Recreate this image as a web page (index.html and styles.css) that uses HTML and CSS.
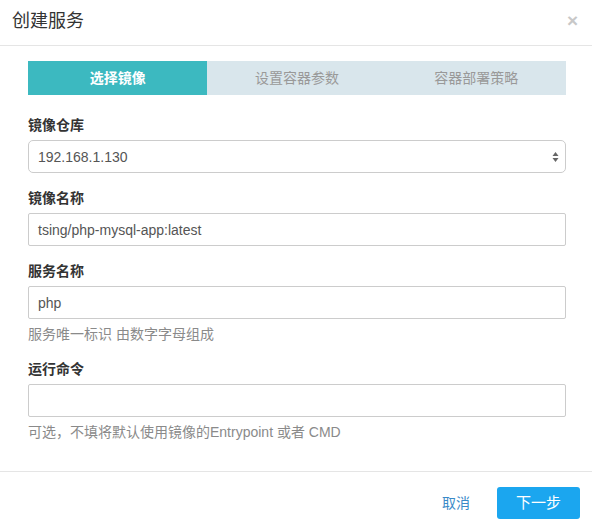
FILE: index.html
```html
<!DOCTYPE html>
<html lang="zh">
<head>
<meta charset="utf-8">
<link rel="stylesheet" href="styles.css">
</head>
<body>
<div class="modal">
  <div class="modal-header">
    <h4 class="modal-title">创建服务</h4>
    <span class="close">×</span>
  </div>
  <div class="modal-body">
    <div class="steps">
      <div class="step active">选择镜像</div>
      <div class="step">设置容器参数</div>
      <div class="step">容器部署策略</div>
    </div>
    <div class="form-group">
      <label class="label">镜像仓库</label>
      <div class="control select">
        <span>192.168.1.130</span>
        <svg class="arrows" width="7" height="12" viewBox="0 0 7 12"><path d="M3.5 1 L6.5 5 L0.5 5 Z" fill="#666"/><path d="M3.5 11 L6.5 7 L0.5 7 Z" fill="#666"/></svg>
      </div>
    </div>
    <div class="form-group">
      <label class="label">镜像名称</label>
      <div class="control">tsing/php-mysql-app:latest</div>
    </div>
    <div class="form-group">
      <label class="label">服务名称</label>
      <div class="control">php</div>
      <p class="help">服务唯一标识 由数字字母组成</p>
    </div>
    <div class="form-group">
      <label class="label">运行命令</label>
      <div class="control"></div>
      <p class="help">可选，不填将默认使用镜像的Entrypoint 或者 CMD</p>
    </div>
  </div>
  <div class="modal-footer">
    <span class="btn-link">取消</span>
    <span class="btn-primary">下一步</span>
  </div>
</div>
</body>
</html>
```
FILE: styles.css
```css
* { box-sizing: border-box; }
html, body { margin: 0; padding: 0; background: #fff; }
body {
  font-family: "Liberation Sans", "Noto Sans CJK SC", sans-serif;
  font-size: 14px;
  line-height: 20px;
  color: #333;
}
.modal { width: 592px; background: #fff; }
.modal-header {
  height: 46px;
  border-bottom: 1px solid #e5e5e5;
  display: flex;
  align-items: center;
  justify-content: space-between;
  padding: 0 14px 4px 12px;
}
.modal-title {
  margin: 0;
  font-size: 18px;
  font-weight: normal;
  line-height: 24px;
  color: #333;
}
.close {
  font-size: 19px;
  font-weight: bold;
  color: #c8c8c8;
  line-height: 20px;
}
.modal-body { padding: 15px 26px 29px 28px; }
.steps {
  display: flex;
  height: 34px;
  background: #d9e6ec;
  margin-bottom: 20px;
}
.step {
  flex: 1;
  display: flex;
  align-items: center;
  justify-content: center;
  color: #999;
  font-size: 14px;
}
.step.active { background: #3cb9c0; color: #fff; font-weight: bold; }
.form-group { margin-bottom: 15px; }
.form-group:last-child { margin-bottom: 0; }
.label { display: block; font-weight: bold; margin-bottom: 5px; }
.control {
  height: 33px;
  border: 1px solid #ccc;
  border-radius: 2px;
  padding: 0 9px;
  display: flex;
  align-items: center;
  color: #555;
  font-size: 14px;
}
.select { justify-content: space-between; border-radius: 5px; padding-right: 6px; background: #fff; }
.arrows { display: block; }
.help { margin: 5px 0 0; color: #8a8a8a; font-size: 14px; }
.modal-footer {
  border-top: 1px solid #e5e5e5;
  padding: 15px 12px 9px 0;
  display: flex;
  justify-content: flex-end;
  align-items: center;
  gap: 27px;
}
.btn-link { color: #3a8ac8; }
.btn-primary {
  width: 83px;
  height: 32px;
  background: #1ba6ef;
  color: #fff;
  border-radius: 3px;
  display: flex;
  align-items: center;
  justify-content: center;
  font-size: 15px;
}
```
